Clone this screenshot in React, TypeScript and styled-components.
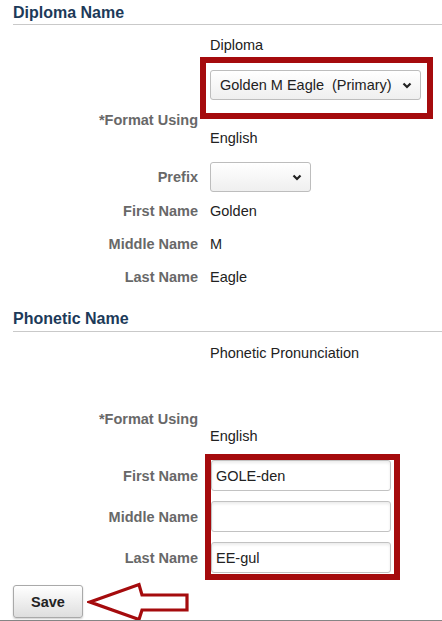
import styled, { createGlobalStyle } from "styled-components";

const GlobalStyle = createGlobalStyle`
  html, body {
    margin: 0;
    padding: 0;
    background: #ffffff;
    overflow: hidden;
  }
  body {
    font-family: "Liberation Sans", Arial, sans-serif;
    font-size: 14.5px;
    color: #222222;
  }
`;

const Page = styled.div`
  width: 442px;
  height: 621px;
  display: flex;
  flex-direction: column;
`;

const SectionHeader = styled.h2<{ $top: number; $pad: number }>`
  margin: ${(p) => p.$top}px 0 0 13px;
  padding: 0 0 ${(p) => p.$pad}px;
  font-size: 16px;
  line-height: 20px;
  font-weight: 700;
  color: #1c3a59;
  border-bottom: 1px solid #c9c9c9;
`;

const Row = styled.div<{ $top: number; $align?: string }>`
  display: grid;
  grid-template-columns: 198px 1fr;
  column-gap: 12px;
  align-items: ${(p) => p.$align || "center"};
  margin-top: ${(p) => p.$top}px;
  line-height: 16px;
`;

const Label = styled.div`
  text-align: right;
  font-weight: 700;
  color: #686868;
  white-space: nowrap;
`;

const Value = styled.div<{ $offset?: number }>`
  padding-top: ${(p) => p.$offset || 0}px;
  color: #222222;
  white-space: pre;
`;

// red annotation frame drawn around the fields
const Callout = styled.div<{ $inset: string; $pad: string }>`
  margin: ${(p) => p.$inset};
  padding: ${(p) => p.$pad};
  border: 6px solid #a50b0d;
  box-sizing: border-box;
`;

const Dropdown = styled.div<{ $width: number }>`
  width: ${(p) => p.$width}px;
  height: 30px;
  box-sizing: border-box;
  display: flex;
  align-items: center;
  justify-content: space-between;
  padding: 0 8px 0 9px;
  border: 1px solid #bdbdbd;
  border-radius: 3px;
  background: linear-gradient(#ffffff, #efefef);
  color: #222222;
  white-space: pre;
`;

const FieldGroup = styled.div`
  display: grid;
  grid-template-columns: 198px 1fr;
  column-gap: 12px;
  margin-top: 10px;
`;

const LabelStack = styled.div`
  display: flex;
  flex-direction: column;
  gap: 10px;
  padding-top: 6px;
`;

const StackLabel = styled(Label)`
  height: 31px;
  display: flex;
  align-items: center;
  justify-content: flex-end;
`;

const InputStack = styled.div`
  display: flex;
  flex-direction: column;
  gap: 10px;
`;

const TextInput = styled.input`
  width: 180px;
  height: 31px;
  box-sizing: border-box;
  margin: 0;
  padding: 0 4px;
  border: 1px solid #c2c2c2;
  border-radius: 3px;
  background: #ffffff;
  box-shadow: inset 0 2px 3px rgba(0, 0, 0, 0.08);
  font-family: "Liberation Sans", Arial, sans-serif;
  font-size: 14.5px;
  color: #222222;
  outline: none;
`;

const ButtonRow = styled.div`
  display: flex;
  align-items: center;
  height: 33px;
  margin-top: 5px;
  padding-left: 13px;
  gap: 4px;
`;

const SaveButton = styled.button`
  width: 70px;
  height: 33px;
  box-sizing: border-box;
  border: 1px solid #a9a9a9;
  border-radius: 3px;
  background: linear-gradient(#ffffff, #dedede);
  box-shadow: 0 1px 2px rgba(0, 0, 0, 0.2);
  font-family: "Liberation Sans", Arial, sans-serif;
  font-size: 14.5px;
  font-weight: 700;
  color: #222222;
`;

const BottomRule = styled.div`
  margin-top: 2px;
  height: 1px;
  background: #858585;
`;

const Chevron = () => (
  <svg width="10" height="7" viewBox="0 0 10 7">
    <path d="M1.5 1.5 L5 5 L8.5 1.5" fill="none" stroke="#222" strokeWidth="2.2" />
  </svg>
);

const PointerArrow = () => (
  <svg width="104" height="40" viewBox="0 0 104 40">
    <path
      d="M3 20 L52 2.5 L55 13 L100 13 L100 28 L55 28 L52 37.5 Z"
      fill="#ffffff"
      stroke="#a50b0d"
      strokeWidth="3.2"
      strokeLinejoin="miter"
    />
  </svg>
);

const App = () => {
  return (
    <Page>
      <GlobalStyle />
      <SectionHeader $top={3} $pad={1}>Diploma Name</SectionHeader>
      <Row $top={12}>
        <Label />
        <Value>Diploma</Value>
      </Row>
      <Row $top={17}>
        <Label />
        <Callout $inset="-13px 0 -19px -10px" $pad="7px 6px 13px 4px" style={{ width: 233 }}>
          <Dropdown $width={211}>
            <span>Golden M Eagle  (Primary)</span>
            <Chevron />
          </Dropdown>
        </Callout>
      </Row>
      <Row $top={12} $align="start">
        <Label>*Format Using</Label>
        <Value $offset={18}>English</Value>
      </Row>
      <Row $top={16}>
        <Label>Prefix</Label>
        <Dropdown $width={101}>
          <span />
          <Chevron />
        </Dropdown>
      </Row>
      <Row $top={11}>
        <Label>First Name</Label>
        <Value>Golden</Value>
      </Row>
      <Row $top={17}>
        <Label>Middle Name</Label>
        <Value>M</Value>
      </Row>
      <Row $top={17}>
        <Label>Last Name</Label>
        <Value>Eagle</Value>
      </Row>

      <SectionHeader $top={24} $pad={2}>Phonetic Name</SectionHeader>
      <Row $top={13}>
        <Label />
        <Value>Phonetic Pronunciation</Value>
      </Row>
      <Row $top={50} $align="start">
        <Label>*Format Using</Label>
        <Value $offset={17}>English</Value>
      </Row>
      <FieldGroup>
        <LabelStack>
          <StackLabel>First Name</StackLabel>
          <StackLabel>Middle Name</StackLabel>
          <StackLabel>Last Name</StackLabel>
        </LabelStack>
        <Callout $inset="0 0 0 -5px" $pad="0 3px 1px 0" style={{ width: 195 }}>
          <InputStack>
            <TextInput defaultValue="GOLE-den" />
            <TextInput defaultValue="" />
            <TextInput defaultValue="EE-gul" />
          </InputStack>
        </Callout>
      </FieldGroup>

      <ButtonRow>
        <SaveButton>Save</SaveButton>
        <PointerArrow />
      </ButtonRow>
      <BottomRule />
    </Page>
  );
};

export default App;
